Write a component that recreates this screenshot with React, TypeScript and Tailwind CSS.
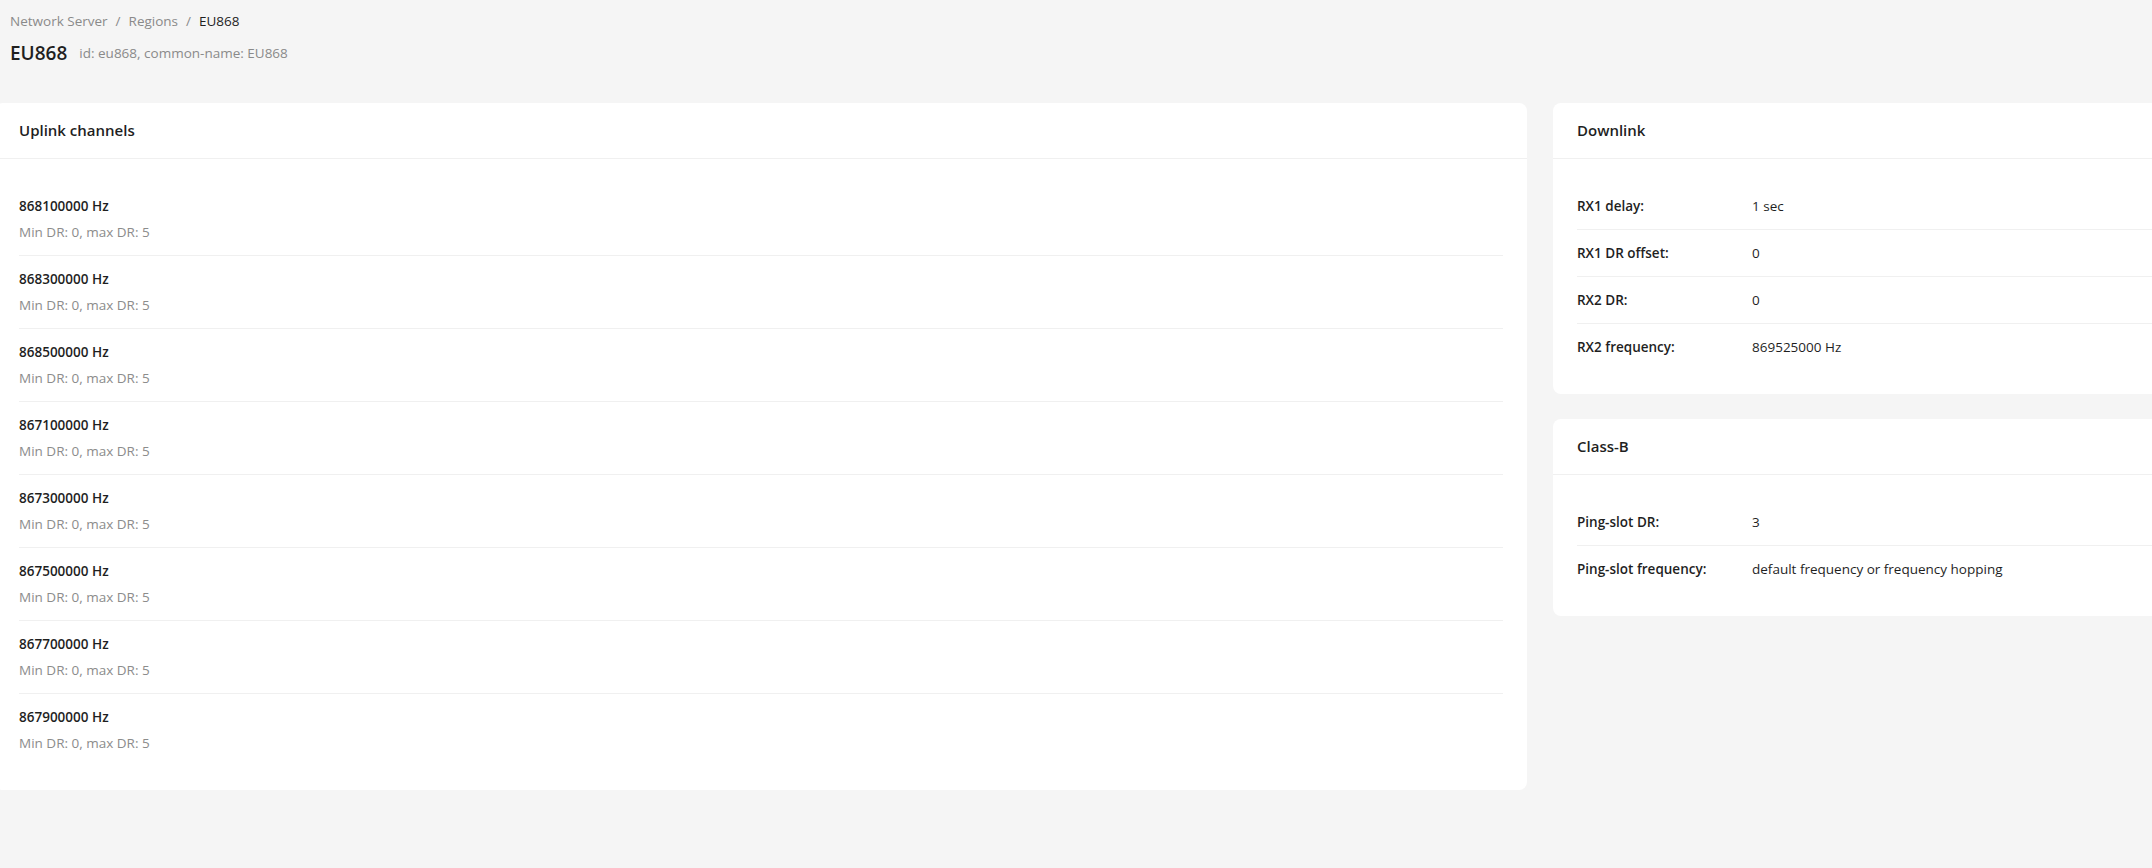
import React from 'react';

const channels = [
  868100000, 868300000, 868500000, 867100000, 867300000, 867500000, 867700000, 867900000,
];

const downlink = [
  { label: 'RX1 delay:', value: '1 sec' },
  { label: 'RX1 DR offset:', value: '0' },
  { label: 'RX2 DR:', value: '0' },
  { label: 'RX2 frequency:', value: '869525000 Hz' },
];

const classB = [
  { label: 'Ping-slot DR:', value: '3' },
  { label: 'Ping-slot frequency:', value: 'default frequency or frequency hopping' },
];

const Card: React.FC<{ title: string; children: React.ReactNode; className?: string }> = ({
  title,
  children,
  className = '',
}) => (
  <div className={`rounded-lg bg-white ${className}`}>
    <div className="flex h-[56px] items-center border-b border-[#f0f0f0] px-6 text-[15px] font-semibold text-[#1f1f1f]">
      {title}
    </div>
    <div className="p-6">{children}</div>
  </div>
);

const KeyValueList: React.FC<{ rows: { label: string; value: string }[] }> = ({ rows }) => (
  <div>
    {rows.map((row, i) => (
      <div
        key={row.label}
        className={`flex py-3 leading-[22px] ${i < rows.length - 1 ? 'border-b border-[#f0f0f0]' : ''}`}
      >
        <div className="w-[175px] shrink-0 font-semibold text-[#1f1f1f]">{row.label}</div>
        <div className="text-[#1f1f1f]">{row.value}</div>
      </div>
    ))}
  </div>
);

const App: React.FC = () => {
  return (
    <div className="h-[868px] w-full overflow-hidden bg-[#f5f5f5] font-['Open_Sans',sans-serif] text-[13.5px] text-[#1f1f1f]">
      {/* Page header */}
      <div className="px-[10px] pt-[10px]">
        <div className="flex items-center gap-2 leading-[22px] text-[#8a8a8a]">
          <span>Network Server</span>
          <span>/</span>
          <span>Regions</span>
          <span>/</span>
          <span className="text-[#1f1f1f]">EU868</span>
        </div>
        <div className="mt-[5px] flex h-[32px] items-center">
          <span className="mr-3 text-[19px] font-semibold text-[#1f1f1f]">EU868</span>
          <span className="text-[#8a8a8a]">id: eu868, common-name: EU868</span>
        </div>
      </div>

      {/* Content */}
      <div className="ml-[-5px] mt-[34px] flex items-start gap-[26px]">
        <Card title="Uplink channels" className="w-[1532px] shrink-0">
          {channels.map((freq, i) => (
            <div
              key={freq}
              className={`py-3 ${i < channels.length - 1 ? 'border-b border-[#f0f0f0]' : ''}`}
            >
              <div className="mb-1 font-semibold leading-[22px] text-[#1f1f1f]">{freq} Hz</div>
              <div className="leading-[22px] text-[#8c8c8c]">Min DR: 0, max DR: 5</div>
            </div>
          ))}
        </Card>

        <div className="flex w-[760px] shrink-0 flex-col gap-[25px]">
          <Card title="Downlink">
            <KeyValueList rows={downlink} />
          </Card>
          <Card title="Class-B">
            <KeyValueList rows={classB} />
          </Card>
        </div>
      </div>
    </div>
  );
};

export default App;
